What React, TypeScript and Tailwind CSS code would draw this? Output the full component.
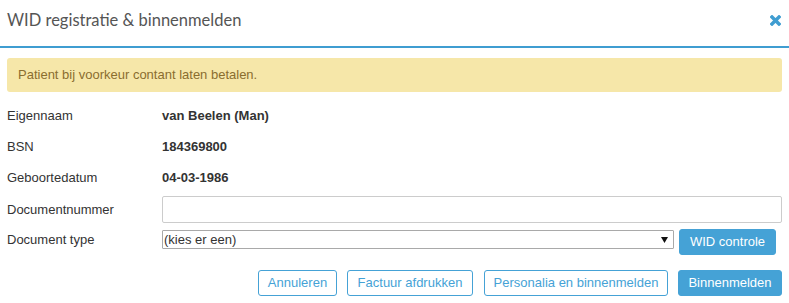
export default function App() {
  const rows = [
    { label: "Eigennaam", value: "van Beelen (Man)" },
    { label: "BSN", value: "184369800" },
    { label: "Geboortedatum", value: "04-03-1986" },
  ]

  const outline = "h-[26px] rounded-[3px] border border-[#45a2d6] text-[#45a2d6] bg-white flex items-center justify-center"
  const solid = "h-[26px] rounded-[3px] border border-[#45a2d6] bg-[#45a2d6] text-white flex items-center justify-center"

  return (
    <div className="w-[789px] h-[303px] bg-white text-[13px] text-[#333] font-['Liberation_Sans',Arial,sans-serif]">
      {/* Header */}
      <div className="h-[48px] flex items-center justify-between pl-[7px] pr-[8px] border-b-2 border-[#3f9dd1]">
        <h2 className="text-[16.5px] text-[#555] font-['Lato',sans-serif] -mt-[5px]">
          WID registratie &amp; binnenmelden
        </h2>
        <svg width="11" height="11" viewBox="0 0 11 11" className="-mt-[6px]">
          <path d="M2 2 L9 9 M9 2 L2 9" stroke="#3f9dd1" strokeWidth="3.4" strokeLinecap="square" />
        </svg>
      </div>

      <div className="px-[7px]">
        {/* Alert */}
        <div className="mt-[10px] h-[34px] flex items-center px-[11px] rounded-[3px] bg-[#f6e7a9] text-[#8a6d2f]">
          Patient bij voorkeur contant laten betalen.
        </div>

        {/* Details */}
        <div className="mt-[8px]">
          {rows.map((r) => (
            <div key={r.label} className="flex items-center h-[31px]">
              <div className="w-[155px]">{r.label}</div>
              <div className="font-bold">{r.value}</div>
            </div>
          ))}

          <div className="flex items-center mt-[3px] h-[27px]">
            <div className="w-[155px]">Documentnummer</div>
            <input className="flex-1 h-[27px] border border-[#ccc] rounded-[2px] px-2 outline-none" />
          </div>

          <div className="flex items-start mt-[6px]">
            <div className="w-[155px] h-[19px] leading-[19px] mt-[1px]">Document type</div>
            <div className="relative flex-1 mt-[1px]">
              <select className="appearance-none w-full h-[19px] border border-[#a9a9a9] rounded-[1px] bg-white pl-[1px] text-[13px] leading-[17px] outline-none">
                <option>(kies er een)</option>
              </select>
              <svg width="7" height="6" viewBox="0 0 7 6" className="absolute right-[6px] top-[7px] pointer-events-none">
                <path d="M0 0 H7 L3.5 6 Z" fill="#111" />
              </svg>
            </div>
            <button className={`${solid} ml-[5px] mr-[6px] w-[97px]`}>WID controle</button>
          </div>

          {/* Footer buttons */}
          <div className="flex justify-end mt-[15px]">
            <button className={`${outline} w-[79px]`}>Annuleren</button>
            <button className={`${outline} w-[126px] ml-[10px]`}>Factuur afdrukken</button>
            <button className={`${outline} w-[184px] ml-[11px]`}>Personalia en binnenmelden</button>
            <button className={`${solid} w-[104px] ml-[10px]`}>Binnenmelden</button>
          </div>
        </div>
      </div>
    </div>
  )
}
